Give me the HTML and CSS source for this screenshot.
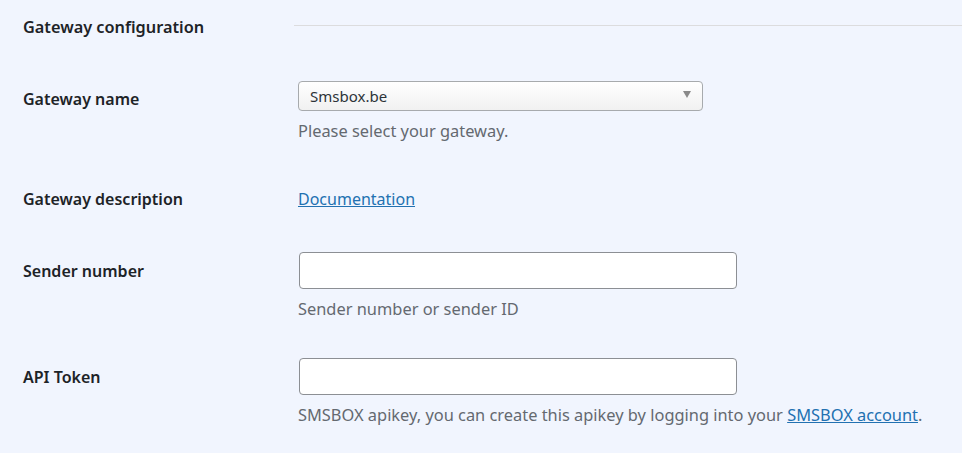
FILE: index.html
```html
<!DOCTYPE html>
<html lang="en">
<head>
<meta charset="utf-8">
<title>Gateway configuration</title>
<link rel="stylesheet" href="styles.css">
</head>
<body>
<main class="settings">
  <div class="row row-heading">
    <h2 class="label heading">Gateway configuration</h2>
    <div class="field"><hr class="sep"></div>
  </div>

  <div class="row row-select">
    <div class="label label-select">Gateway name</div>
    <div class="field">
      <div class="select">
        <span class="select-value">Smsbox.be</span>
        <span class="select-arrow"></span>
      </div>
      <p class="description">Please select your gateway.</p>
    </div>
  </div>

  <div class="row row-text">
    <div class="label">Gateway description</div>
    <div class="field"><a class="link" href="#">Documentation</a></div>
  </div>

  <div class="row row-input1">
    <div class="label label-input">Sender number</div>
    <div class="field">
      <input class="input" type="text">
      <p class="description">Sender number or sender ID</p>
    </div>
  </div>

  <div class="row row-input2">
    <div class="label label-input">API Token</div>
    <div class="field">
      <input class="input" type="text">
      <p class="description">SMSBOX apikey, you can create this apikey by logging into your <a class="link" href="#">SMSBOX account</a>.</p>
    </div>
  </div>
</main>
</body>
</html>
```

FILE: styles.css
```css
html, body {
  margin: 0;
  padding: 0;
  background: #f1f5fe;
}
body {
  font-family: "Noto Sans", "Open Sans", sans-serif;
  font-size: 16px;
  line-height: 20px;
  color: #1d2327;
}
.settings {
  padding: 0 0 0 23px;
}
.row {
  display: grid;
  grid-template-columns: 275px 1fr;
  align-items: start;
}
.label {
  margin: 0;
  font-size: 16px;
  font-weight: 600;
  line-height: 20px;
  color: #1d2327;
}
.heading {
  font-size: 16.3px;
}
.row-heading { margin-top: 17px; }
.sep {
  margin: 8px 0 0 -4px;
  border: 0;
  border-top: 1px solid #dcdcde;
  height: 0;
}
.row-select { margin-top: 44px; }
.label-select { padding-top: 8px; }
.row-text { margin-top: 48px; }
.row-input1 { margin-top: 43px; }
.row-input2 { margin-top: 39px; }
.label-input { padding-top: 9px; }
.field { min-width: 0; }

.select {
  box-sizing: border-box;
  width: 405px;
  height: 30px;
  border: 1px solid #a7aaad;
  border-radius: 4px;
  background: linear-gradient(#ffffff, #f1f1f1);
  display: flex;
  align-items: center;
  justify-content: space-between;
  padding: 0 11px 1px 11px;
}
.select-value {
  font-size: 15px;
  color: #2c3338;
}
.select-arrow {
  width: 0;
  height: 0;
  border-left: 4px solid transparent;
  border-right: 4px solid transparent;
  border-top: 7px solid #8a8a8a;
  margin-top: -3px;
}
.input {
  display: block;
  box-sizing: border-box;
  width: 438px;
  height: 37px;
  margin: 0 0 0 1px;
  border: 1px solid #8c8f94;
  border-radius: 4px;
  background: #fff;
  font: inherit;
}
.description {
  margin: 10px 0 0;
  font-size: 16.4px;
  line-height: 20px;
  color: #646970;
}
.link {
  color: #2271b1;
  text-decoration: underline;
}
```
